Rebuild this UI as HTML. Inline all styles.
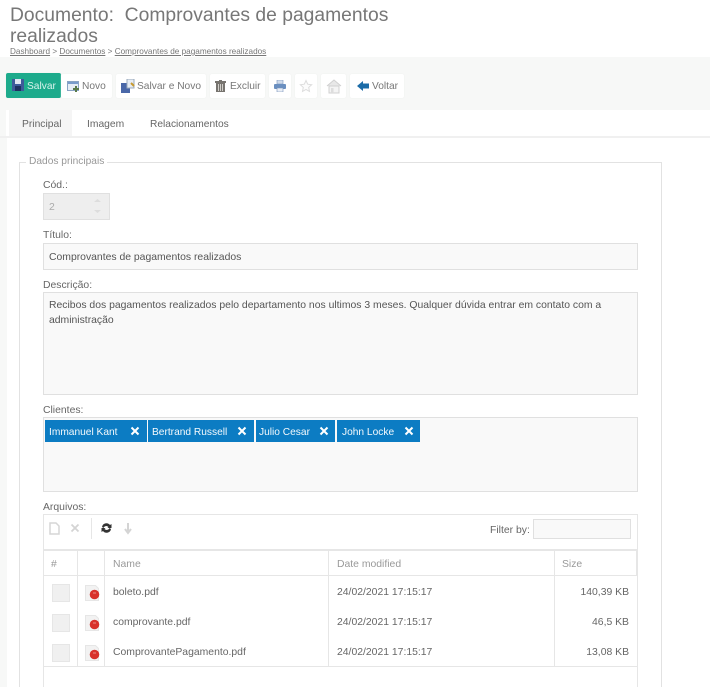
<!DOCTYPE html>
<html><head><meta charset="utf-8"><style>
html,body{margin:0;padding:0;background:#fff}
#p{position:relative;width:710px;height:687px;overflow:hidden;background:#fff;font-family:"Liberation Sans",sans-serif;font-size:10.4px;color:#555;filter:blur(.3px)}
#p div,#p span.a,#p svg{position:absolute}
.t{white-space:nowrap}
.b{background:#fff;border-radius:2px;box-shadow:0 0 1px #e8e8e8;height:24px;top:74px;line-height:24px;color:#777;font-size:10.200px;white-space:nowrap}
.b span.a{top:1px!important}
.l{color:#666;font-size:10.4px;white-space:nowrap;left:43px}
.i{left:43px;width:595px;background:#f9f9f9;border:1px solid #e0e0e0;box-sizing:border-box}
.c{background:#0c7cc3;height:22px;top:420px;color:#f4f9fc;line-height:25px;white-space:nowrap;box-sizing:border-box;padding-left:4px;font-size:10.200px}
.r{color:#666;white-space:nowrap;font-size:10.4px}
.cb{left:52px;width:18px;height:18px;background:#f0f0f0;border:1px solid #e6e6e6;box-sizing:border-box}
.ln{background:#e6e6e6}
</style></head><body><div id="p">
<div style="left:0;top:57px;width:710px;height:53px;background:#f7f8f7"></div>
<div style="left:0;top:110px;width:6px;height:28px;background:#f7f8f7"></div>
<div style="left:0;top:136px;width:710px;height:2px;background:#f0f0f0"></div>
<div style="left:0;top:138px;width:7px;height:549px;background:#f7f8f7"></div>

<div class="t" style="left:10px;top:4px;font-size:19.3px;line-height:24px;color:#777">Documento:&nbsp; Comprovantes de pagamentos</div>
<div class="t" style="left:10px;top:25px;font-size:19.3px;line-height:24px;color:#777">realizados</div>
<div class="t" style="left:10px;top:46px;font-size:8.200px;line-height:11px;color:#777"><u>Dashboard</u> &gt; <u>Documentos</u> &gt; <u>Comprovantes de pagamentos realizados</u></div>

<div class="b" style="left:6px;top:73px;width:55px;height:25px;background:#1dab8c;border-radius:2px;color:#d9f3ec"><span class="a" style="left:21px;line-height:26px">Salvar</span>
<svg style="left:6px;top:6px" width="12" height="12"><rect width="12" height="12" fill="#3d5a9a"/><rect x="3" y="0" width="6" height="5" fill="#dfe6f2"/><rect x="3" y="7" width="6" height="5" fill="#1d3060"/></svg></div>
<div class="b" style="left:61px;width:51px"><span class="a" style="left:21px;top:0">Novo</span>
<svg style="left:6px;top:6px" width="13" height="13"><rect x=".5" y="1.500" width="11" height="9" fill="#e6edf6" stroke="#8aa4c4"/><rect x="1" y="2" width="10" height="2" fill="#7a9ccc"/><path d="M9 6v6M6 9h6" stroke="#5a7a4a" stroke-width="2"/></svg></div>
<div class="b" style="left:116px;width:90px"><span class="a" style="left:21px;top:0">Salvar e Novo</span>
<svg style="left:5px;top:5px" width="14" height="14"><rect x="0" y="4" width="9" height="10" fill="#4a68a8"/><rect x="6" y="0" width="7" height="9" fill="#e6ecf4" stroke="#9ab"/><path d="M10 4l3 3" stroke="#c89a30" stroke-width="2"/></svg></div>
<div class="b" style="left:210px;width:55px"><span class="a" style="left:20px;top:0">Excluir</span>
<svg style="left:5px;top:6px" width="12" height="13"><rect x="1" y="3" width="9" height="9" fill="#77746f"/><rect x="0" y="1" width="11" height="2" fill="#77746f"/><rect x="4" y="0" width="3" height="1" fill="#77746f"/><path d="M3.500 4v7M5.500 4v7M7.500 4v7" stroke="#d0cec9"/></svg></div>
<div class="b" style="left:269px;width:22px"><svg style="left:5px;top:6px" width="12" height="12"><rect x="3" y="0" width="6" height="4" fill="#d0dbeb" stroke="#7a94bc" stroke-width=".6"/><rect x="0" y="4" width="12" height="5" rx="1" fill="#6a8fc0"/><rect x="3" y="8" width="6" height="4" fill="#e9eef6" stroke="#7a94bc" stroke-width=".6"/></svg></div>
<div class="b" style="left:295px;width:22px"><svg style="left:4px;top:5px" width="14" height="14"><path d="M7 1.500l1.700 3.700 4 .5-3 2.700.8 4L7 10.400 3.500 12.400l.8-4-3-2.700 4-.5z" fill="#fcfcfc" stroke="#ddd"/></svg></div>
<div class="b" style="left:321px;width:25px"><svg style="left:5px;top:4px" width="16" height="16"><path d="M1 8l7-6 7 6" fill="#e8e8e8" stroke="#d0d0d0"/><rect x="3" y="8" width="10" height="7" fill="#f4f4f4" stroke="#d0d0d0"/><rect x="5" y="10" width="2.500" height="5" fill="#ddd"/></svg></div>
<div class="b" style="left:350px;width:54px"><span class="a" style="left:22px;top:0">Voltar</span>
<svg style="left:7px;top:7px" width="12" height="10"><path d="M0 5l6-5v2.500h6v5H6V10z" fill="#1c6ca8"/></svg></div>

<div class="t" style="left:9px;top:110px;width:63px;height:26px;background:#f5f5f5"></div>
<div class="t" style="left:22px;top:119px;color:#666;font-size:10.300px">Principal</div>
<div class="t" style="left:87px;top:119px;color:#666;font-size:10.300px">Imagem</div>
<div class="t" style="left:150px;top:119px;color:#666;font-size:10.200px">Relacionamentos</div>

<div style="left:19px;top:162px;width:643px;height:540px;border:1px solid #e2e2e2;box-sizing:border-box"></div>
<div class="t" style="left:26px;top:156px;padding:0 3px;background:#fff;color:#999;font-size:10.200px">Dados principais</div>

<div class="l" style="top:180px">Cód.:</div>
<div style="left:43px;top:193px;width:67px;height:27px;background:#eee;border:1px solid #e0e0e0;box-sizing:border-box;color:#aaa;line-height:27px;padding-left:5px">2</div>
<svg style="left:93px;top:197px" width="9" height="18"><path d="M1 5l3.500-3L8 5zM1 13l3.500 3L8 13z" fill="#ddd"/></svg>

<div class="l" style="top:230px">Título:</div>
<div class="i" style="top:243px;height:27px;line-height:28px;padding-left:5px;color:#555">Comprovantes de pagamentos realizados</div>

<div class="l" style="top:280px">Descrição:</div>
<div class="i" style="top:292px;height:103px;padding:6px 5px;line-height:14.500px;color:#555">Recibos dos pagamentos realizados pelo departamento nos ultimos 3 meses. Qualquer dúvida entrar em contato com a<br>administração</div>

<div class="l" style="top:405px">Clientes:</div>
<div class="i" style="top:417px;height:75px"></div>
<div class="c" style="left:45px;width:102px">Immanuel Kant<svg style="left:85px;top:6px" width="10" height="10"><path d="M1.500 1.500l7 7M8.500 1.500l-7 7" stroke="#fff" stroke-width="2"/></svg></div>
<div class="c" style="left:148px;width:106px">Bertrand Russell<svg style="left:89px;top:6px" width="10" height="10"><path d="M1.500 1.500l7 7M8.500 1.500l-7 7" stroke="#fff" stroke-width="2"/></svg></div>
<div class="c" style="left:256px;width:79px;padding-left:3px">Julio Cesar<svg style="left:63px;top:6px" width="10" height="10"><path d="M1.500 1.500l7 7M8.500 1.500l-7 7" stroke="#fff" stroke-width="2"/></svg></div>
<div class="c" style="left:337px;width:83px;padding-left:5px">John Locke<svg style="left:67px;top:6px" width="10" height="10"><path d="M1.500 1.500l7 7M8.500 1.500l-7 7" stroke="#fff" stroke-width="2"/></svg></div>

<div class="l" style="top:502px">Arquivos:</div>
<div style="left:43px;top:514px;width:595px;height:190px;border:1px solid #e6e6e6;box-sizing:border-box;background:#fff"></div>
<svg style="left:49px;top:521px" width="90" height="16"><path d="M1 2h6l3 3v8H1z" fill="none" stroke="#d6d6d6" stroke-width="1.500"/><path d="M22.500 3.500l7 7M29.500 3.500l-7 7" stroke="#d4d4d4" stroke-width="1.800"/><path d="M53 6a4.500 4.500 0 0 1 8-2l1.500-1v4h-4l1-1a3 3 0 0 0-5 1zM62 8a4.500 4.500 0 0 1-8 2l-1.500 1V7h4l-1 1a3 3 0 0 0 5-1z" fill="#333"/><path d="M79 2v8M76 8l3 4 3-4" stroke="#d4d4d4" stroke-width="2" fill="none"/></svg>
<div class="ln" style="left:91px;top:518px;width:1px;height:21px"></div>
<div class="r" style="left:490px;top:525px">Filter by:</div>
<div style="left:533px;top:519px;width:98px;height:20px;background:#f9f9f9;border:1px solid #e0e0e0;box-sizing:border-box"></div>

<div class="ln" style="left:44px;top:549px;width:593px;height:2px"></div>
<div class="ln" style="left:44px;top:575px;width:593px;height:1px"></div>
<div class="ln" style="left:44px;top:666px;width:593px;height:1px"></div>
<div class="ln" style="left:77px;top:550px;width:1px;height:117px"></div>
<div class="ln" style="left:104px;top:550px;width:1px;height:117px"></div>
<div class="ln" style="left:328px;top:550px;width:1px;height:117px"></div>
<div class="ln" style="left:554px;top:550px;width:1px;height:117px"></div>
<div class="ln" style="left:636px;top:550px;width:1px;height:26px"></div>
<div class="r" style="left:51px;top:559px;color:#999">#</div>
<div class="r" style="left:113px;top:559px;color:#999">Name</div>
<div class="r" style="left:337px;top:559px;color:#999">Date modified</div>
<div class="r" style="left:562px;top:559px;color:#999">Size</div>

<div class="cb" style="top:584px"></div>
<div class="cb" style="top:614px"></div>
<div class="cb" style="top:644px"></div>
<svg style="left:85px;top:584px" width="16" height="18"><path d="M.5 1.500h10l3 3v12H.5z" fill="#f2f2f2" stroke="#e6e6e6"/><circle cx="9.500" cy="10.500" r="4.800" fill="#d8322c"/><path d="M8 9h3" stroke="#eb8f88"/></svg>
<svg style="left:85px;top:614px" width="16" height="18"><path d="M.5 1.500h10l3 3v12H.5z" fill="#f2f2f2" stroke="#e6e6e6"/><circle cx="9.500" cy="10.500" r="4.800" fill="#d8322c"/><path d="M8 9h3" stroke="#eb8f88"/></svg>
<svg style="left:85px;top:644px" width="16" height="18"><path d="M.5 1.500h10l3 3v12H.5z" fill="#f2f2f2" stroke="#e6e6e6"/><circle cx="9.500" cy="10.500" r="4.800" fill="#d8322c"/><path d="M8 9h3" stroke="#eb8f88"/></svg>

<div class="r" style="left:113px;top:587px">boleto.pdf</div>
<div class="r" style="left:113px;top:617px">comprovante.pdf</div>
<div class="r" style="left:113px;top:647px">ComprovantePagamento.pdf</div>
<div class="r" style="left:337px;top:587px">24/02/2021 17:15:17</div>
<div class="r" style="left:337px;top:617px">24/02/2021 17:15:17</div>
<div class="r" style="left:337px;top:647px">24/02/2021 17:15:17</div>
<div class="r" style="right:81px;top:587px">140,39 KB</div>
<div class="r" style="right:81px;top:617px">46,5 KB</div>
<div class="r" style="right:81px;top:647px">13,08 KB</div>
</div></body></html>
